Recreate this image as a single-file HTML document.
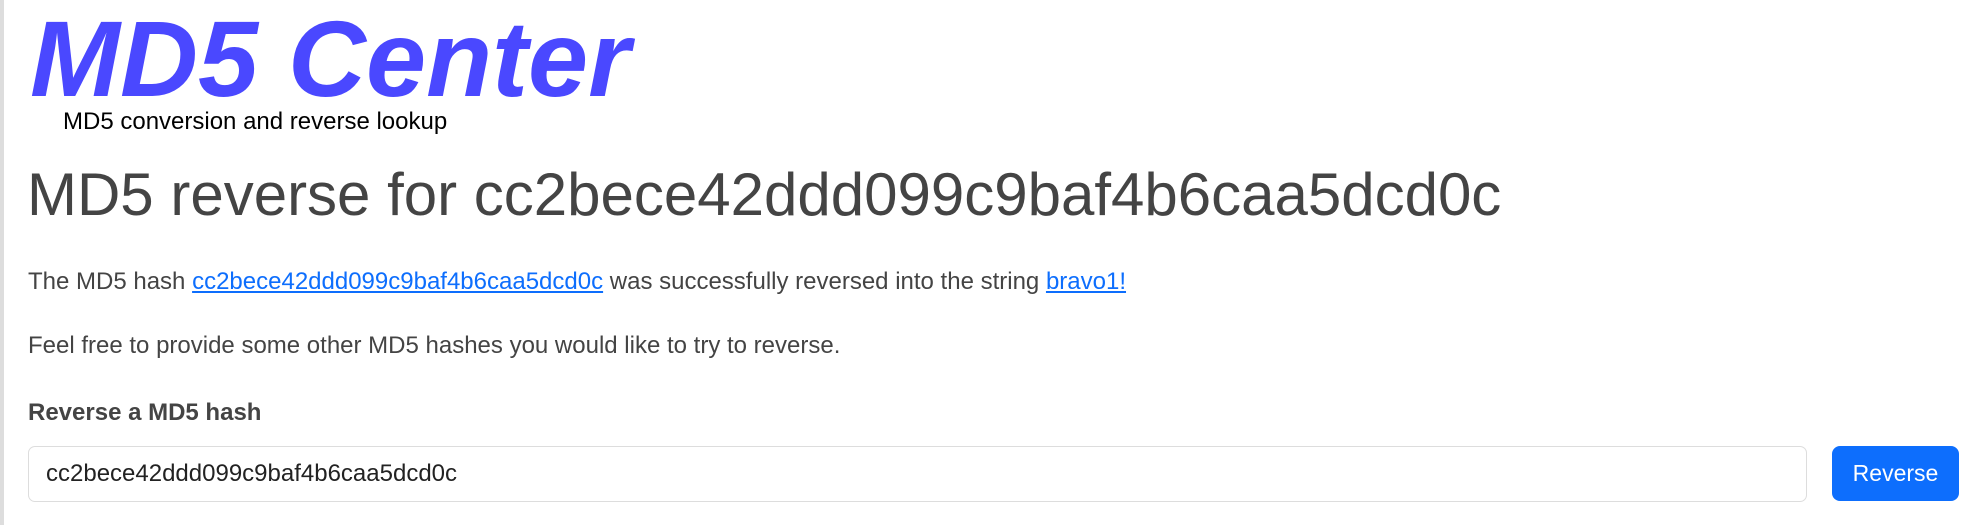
<!DOCTYPE html>
<html><head><style>
html,body{margin:0;padding:0;background:#fff;width:1965px;height:525px;overflow:hidden;font-family:"Liberation Sans",Arial,sans-serif;}
.bar{position:absolute;left:0;top:0;width:4px;height:525px;background:#ddd;}
.t{position:absolute;white-space:nowrap;}
#logo{left:30px;top:-6px;font-size:108px;font-weight:bold;font-style:italic;color:#4a48ff;line-height:130px;}
#sub{left:63px;top:108px;font-size:24px;color:#000;line-height:28px;}
#h1{left:27px;top:160px;font-size:60px;color:#444;line-height:70px;}
.p{left:28px;font-size:24px;color:#444;line-height:28px;}
a{color:#0d6efd;text-decoration:underline;}
#inp{position:absolute;left:28px;top:446px;width:1779px;height:56px;border:1px solid #ddd;border-radius:7px;box-sizing:border-box;}
#inp span{position:absolute;left:17px;top:13px;font-size:24px;color:#222;}
#btn{position:absolute;left:1832px;top:446px;width:127px;height:55px;background:#0d6efd;border-radius:8px;color:#fff;font-size:23px;text-align:center;line-height:55px;}
</style></head><body>
<div class="bar"></div>
<div class="t" id="logo">MD5 Center</div>
<div class="t" id="sub">MD5 conversion and reverse lookup</div>
<div class="t" id="h1">MD5 reverse for cc2bece42ddd099c9baf4b6caa5dcd0c</div>
<div class="t p" style="top:268px">The MD5 hash <a>cc2bece42ddd099c9baf4b6caa5dcd0c</a> was successfully reversed into the string <a>bravo1!</a></div>
<div class="t p" style="top:332px">Feel free to provide some other MD5 hashes you would like to try to reverse.</div>
<div class="t p" style="top:399px;font-weight:bold">Reverse a MD5 hash</div>
<div id="inp"><span>cc2bece42ddd099c9baf4b6caa5dcd0c</span></div>
<div id="btn">Reverse</div>
</body></html>
